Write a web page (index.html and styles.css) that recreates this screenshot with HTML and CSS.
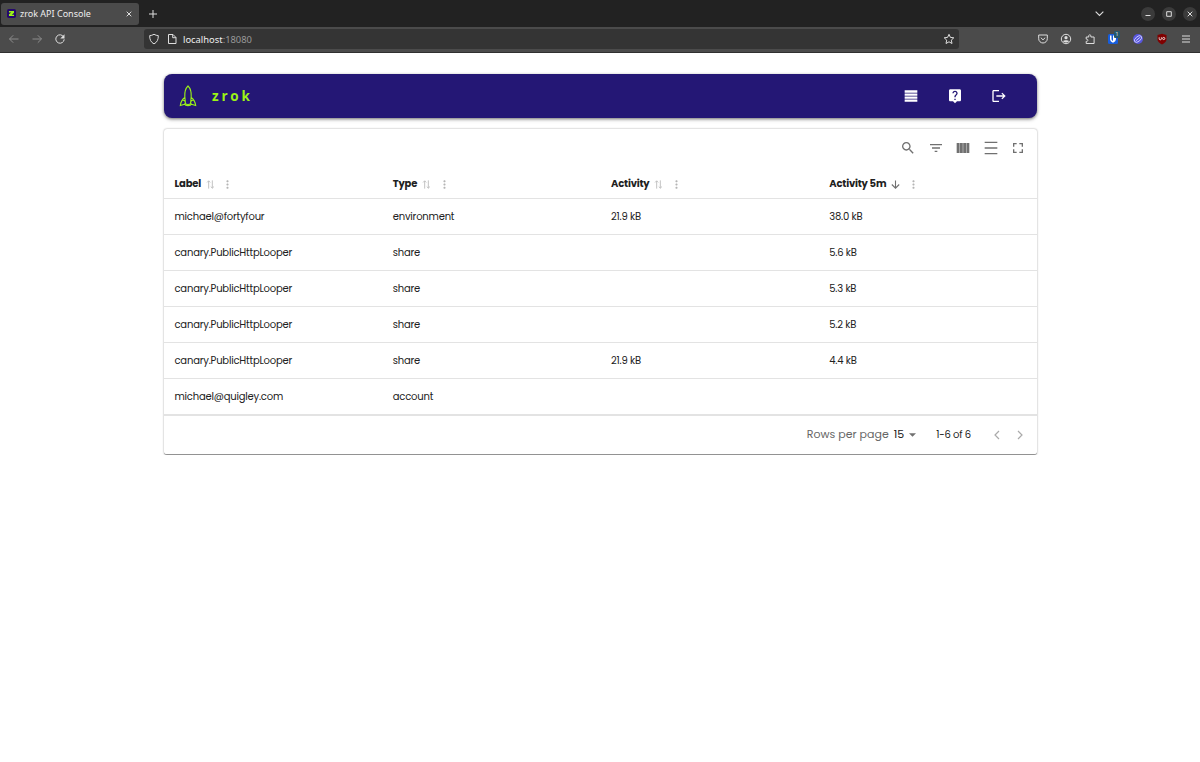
FILE: index.html
```html
<!DOCTYPE html>
<html lang="en">
<head>
    <meta charset="UTF-8">
    <title>zrok API Console</title>
    <link rel="stylesheet" href="styles.css">
</head>
<body>
    <svg class="sprite" width="0" height="0">
        <symbol id="i-sort" viewBox="0 0 24 24"><path d="M8 21V4M4.500 7.500 8 4l3.500 3.500M16 3v17M12.500 16.500 16 20l3.500-3.500" fill="none" stroke="currentColor" stroke-width="2"/></symbol>
        <symbol id="i-dots" viewBox="0 0 24 24"><path d="M12 8c1.100 0 2-.9 2-2s-.9-2-2-2-2 .9-2 2 .9 2 2 2zm0 2c-1.100 0-2 .9-2 2s.9 2 2 2 2-.9 2-2-.9-2-2-2zm0 6c-1.100 0-2 .9-2 2s.9 2 2 2 2-.9 2-2-.9-2-2-2z"/></symbol>
    </svg>

    <!-- Browser -->
    <div class="tab-strip">
        <div class="tab">
            <svg class="favicon" viewBox="0 0 16 16"><rect width="16" height="16" rx="3" fill="#24086d"/><path d="M3.500 3.500h9v3L8.500 10h4v2.500h-9v-3L7.500 6h-4z" fill="#9bf316"/></svg>
            <span class="tab-title">zrok API Console</span>
            <svg class="tab-close" viewBox="0 0 8 8"><path d="M1.700 1.700l4.600 4.600m0-4.600L1.700 6.300"/></svg>
        </div>
        <svg class="new-tab" viewBox="0 0 10 10"><path d="M5 1v8M1 5h8"/></svg>
        <svg class="tab-list" viewBox="0 0 10 10"><path d="M1.500 3.300 5 6.800l3.500-3.500"/></svg>
        <div class="window-controls">
            <span class="window-btn"><svg viewBox="0 0 14 14"><path d="M4.500 8.500h5"/></svg></span>
            <span class="window-btn"><svg viewBox="0 0 14 14"><path d="M4.700 4.700h4.600v4.600H4.700z"/></svg></span>
            <span class="window-btn"><svg viewBox="0 0 14 14"><path d="M4.700 4.700l4.600 4.600m0-4.600L4.700 9.300"/></svg></span>
        </div>
    </div>
    <div class="toolbar">
        <div class="nav-icons">
            <svg class="dim" viewBox="0 0 12 12"><path d="M10.500 6h-9M5.200 2.300 1.500 6l3.700 3.700"/></svg>
            <svg class="dim" viewBox="0 0 12 12"><path d="M1.500 6h9M6.800 2.300 10.500 6 6.800 9.700"/></svg>
            <svg viewBox="0 0 12 12"><path d="M9.700 4A4.200 4.200 0 1 0 10.200 6.300"/><path class="solid" d="M10.500 1.200v4.300H6.300z"/></svg>
        </div>
        <div class="url-bar">
            <svg viewBox="0 0 12 12"><path d="M6 1.300c1.500.9 2.800 1.200 4.300 1.300.1 4-1.200 6.700-4.300 8.300C2.900 9.300 1.600 6.600 1.700 2.600 3.200 2.500 4.500 2.200 6 1.300z"/></svg>
            <svg class="page-icon" viewBox="0 0 12 12"><path d="M2.500 1.500h4.500l3 3v6H2.500zM6.700 1.500v3.200H10"/></svg>
            <span class="url">localhost<span class="port">:18080</span></span>
            <svg class="star" viewBox="0 0 12 12"><path d="M6 1.300l1.400 3.100 3.400.4-2.500 2.300.7 3.400L6 8.800l-3 1.700.7-3.400L1.200 4.800l3.400-.4z"/></svg>
        </div>
        <div class="extensions">
            <svg viewBox="0 0 12 12"><path d="M1.700 2h8.600v3.700a4.300 4.300 0 0 1-8.600 0zM3.800 4.700 6 6.800l2.200-2.100"/></svg>
            <svg viewBox="0 0 12 12"><circle cx="6" cy="6" r="4.700"/><circle class="solid" cx="6" cy="4.700" r="1.600"/><path class="solid" d="M3 8.200c1-1.400 5-1.400 6 0-1.600 1.800-4.400 1.800-6 0z"/></svg>
            <svg viewBox="0 0 12 12"><path d="M2.200 10.500V8.300c2.300.5 2.300-2.600 0-2.200V4h2.600c-.7-3 2.600-3 2.100 0h3.200v6.500z"/></svg>
            <span class="vault">
                <svg viewBox="0 0 12 12"><rect width="10" height="10" y="1" rx="1.500" fill="#175ddc" stroke="none"/><path d="M2 2.500v3.300c0 2 1.200 3 3 4 1.800-1 3-2 3-4V2.500H5v5.600C3.900 7.400 3.500 7 3.500 5.800V2.500z" fill="#fff" stroke="none"/></svg>
                <span class="vault-count">1</span>
            </span>
            <svg viewBox="0 0 12 12"><circle cx="6" cy="6" r="5" fill="#5856dc" stroke="none"/><g stroke="#d0d0ff" stroke-width=".9" transform="rotate(-40 6 6)"><ellipse cx="6" cy="6" rx="4.200" ry="2.400"/><path d="M3.500 6h5"/></g></svg>
            <svg class="blocker" viewBox="0 0 12 12"><path d="M6 .8 10.500 2v4.200c0 2.500-2 4-4.500 5.200-2.500-1.200-4.500-2.700-4.500-5.200V2z" fill="#800000" stroke="none"/><path d="M3.200 4.300v1.500q0 1 1.100 1t1.100-1V4.300" stroke="#fff" stroke-width=".8"/><circle cx="7.700" cy="5.500" r="1.100" stroke="#fff" stroke-width=".8"/></svg>
            <svg viewBox="0 0 12 12"><path d="M2 3h8M2 6h8M2 9h8"/></svg>
        </div>
    </div>

    <div class="container">
        <div class="app-bar">
            <svg class="logo" viewBox="0 0 18 22"><path d="M9 1C6.400 3.500 5.600 7.500 5.800 11.500L6.400 18c.3 1.900 4.900 1.900 5.200 0l.6-6.500C12.400 7.500 11.600 3.500 9 1zM5.800 12.500C3 14.500 1.800 17 1.300 20.500l4.200-1.200.9-1.300c-.1-2-.9-3-2.700-2.700M12.200 12.500c2.800 2 4 4.500 4.500 8l-4.200-1.200-.9-1.300c.1-2 .9-3 2.700-2.700M5.500 19.300c1 1.800 6 1.800 7 0"/></svg>
            <span class="brand">zrok</span>
            <div class="app-actions">
                <svg viewBox="0 0 24 24"><path d="M2.500 3.500h19v3.600h-19zm0 4.800h19v3.300h-19zm0 4.500h19v3.400h-19zm0 4.600h19v3.300h-19z"/></svg>
                <svg viewBox="0 0 24 24"><path d="M19 2H5c-1.100 0-2 .9-2 2v14c0 1.100.9 2 2 2h4l3 3 3-3h4c1.100 0 2-.9 2-2V4c0-1.100-.9-2-2-2zm-6 16h-2v-2h2v2zm2.070-7.750-.9.920C13.450 11.900 13 12.500 13 14h-2v-.5c0-1.100.450-2.100 1.170-2.830l1.240-1.260c.370-.360.590-.860.590-1.410 0-1.100-.9-2-2-2s-2 .9-2 2H8c0-2.210 1.790-4 4-4s4 1.790 4 4c0 .880-.360 1.680-.930 2.250z"/></svg>
                <svg viewBox="0 0 24 24"><path d="m17 7-1.410 1.410L18.170 11H8v2h10.170l-2.580 2.580L17 17l5-5zM4 5h8V3H4c-1.100 0-2 .9-2 2v14c0 1.100.9 2 2 2h8v-2H4V5z"/></svg>
            </div>
        </div>

        <div class="table-card">
            <div class="table-tools">
                <svg viewBox="0 0 24 24"><path d="M15.500 14h-.790l-.280-.270C15.410 12.590 16 11.110 16 9.500 16 5.910 13.090 3 9.500 3S3 5.910 3 9.500 5.910 16 9.500 16c1.610 0 3.090-.590 4.230-1.570l.270.280v.790l5 4.990L20.490 19l-4.990-5zm-6 0C7.010 14 5 11.990 5 9.500S7.010 5 9.500 5 14 7.010 14 9.500 11.990 14 9.500 14z"/></svg>
                <svg viewBox="0 0 24 24"><path d="M10 18h4v-2h-4v2zM3 6v2h18V6H3zm3 7h12v-2H6v2z"/></svg>
                <svg viewBox="0 0 24 24"><path d="M2.500 4.500h4.300v15H2.500zM7.400 4.500h4.300v15H7.400zM12.300 4.500h4.300v15h-4.300zM17.200 4.500h4.300v15h-4.300z"/></svg>
                <svg viewBox="0 0 24 24"><path d="M2.500 2.500h19v2h-19zm0 8.500h19v2h-19zm0 8.500h19v2h-19z"/></svg>
                <svg viewBox="0 0 24 24"><path d="M6.500 14h-2v5.500H10v-2H6.500V14zm-2-4h2V6.500H10v-2H4.500V10zm13 7.500H14v2h5.500V14h-2v3.500zM14 4.500v2h3.500V10h2V4.500H14z"/></svg>
            </div>
            <div class="table-row table-head">
                <div class="cell"><span>Label</span><svg class="sort"><use href="#i-sort"/></svg><svg class="dots"><use href="#i-dots"/></svg></div>
                <div class="cell"><span>Type</span><svg class="sort"><use href="#i-sort"/></svg><svg class="dots"><use href="#i-dots"/></svg></div>
                <div class="cell"><span>Activity</span><svg class="sort"><use href="#i-sort"/></svg><svg class="dots"><use href="#i-dots"/></svg></div>
                <div class="cell"><span>Activity 5m</span><svg class="sort sorted" viewBox="0 0 24 24"><path d="M12 3v17M4 12l8 8 8-8" fill="none" stroke="currentColor" stroke-width="2.400"/></svg><svg class="dots"><use href="#i-dots"/></svg></div>
            </div>
            <div class="table-row">
                <div class="cell">michael@fortyfour</div><div class="cell">environment</div><div class="cell">21.9 kB</div><div class="cell">38.0 kB</div>
            </div>
            <div class="table-row">
                <div class="cell">canary.PublicHttpLooper</div><div class="cell">share</div><div class="cell"></div><div class="cell">5.6 kB</div>
            </div>
            <div class="table-row">
                <div class="cell">canary.PublicHttpLooper</div><div class="cell">share</div><div class="cell"></div><div class="cell">5.3 kB</div>
            </div>
            <div class="table-row">
                <div class="cell">canary.PublicHttpLooper</div><div class="cell">share</div><div class="cell"></div><div class="cell">5.2 kB</div>
            </div>
            <div class="table-row">
                <div class="cell">canary.PublicHttpLooper</div><div class="cell">share</div><div class="cell">21.9 kB</div><div class="cell">4.4 kB</div>
            </div>
            <div class="table-row">
                <div class="cell">michael@quigley.com</div><div class="cell">account</div><div class="cell"></div><div class="cell"></div>
            </div>
            <div class="pagination">
                <span class="rows-label">Rows per page</span>
                <span class="rows-value">15</span>
                <svg class="caret" viewBox="0 0 8 4"><path d="M0 0h8L4 4z"/></svg>
                <span class="range">1-6 of 6</span>
                <svg class="page-btn" viewBox="0 0 8 10"><path d="M6 1 2 5l4 4"/></svg>
                <svg class="page-btn" viewBox="0 0 8 10"><path d="m2 1 4 4-4 4"/></svg>
            </div>
        </div>
    </div>
</body>
</html>
```

FILE: styles.css
```css
* {
    box-sizing: border-box;
}

body {
    margin: 0;
    background: white;
    color: #212121;
    font-family: Poppins, Inter, sans-serif;
    font-size: 10px;
    letter-spacing: -0.2px;
}

svg {
    display: block;
    flex: none;
}

.sprite {
    position: absolute;
}

/* Browser */
.tab-strip {
    display: flex;
    align-items: center;
    height: 27px;
    background: #222;
    padding: 0 3px 0 1px;
    letter-spacing: 0;
}

.tab-strip svg,
.toolbar svg {
    fill: none;
    stroke: #dedede;
    stroke-width: 1;
}

.tab {
    display: flex;
    align-items: center;
    width: 138px;
    height: 22px;
    padding: 0 6px;
    background: #4b4b4b;
    border-radius: 3px;
}

.tab .favicon {
    width: 9px;
    height: 9px;
    stroke: none;
}

.tab-title {
    margin-left: 4px;
    font: 9px "Noto Sans", sans-serif;
    color: #eee;
    white-space: nowrap;
}

.tab-close {
    width: 8px;
    height: 8px;
    margin-left: auto;
}

.new-tab {
    width: 10px;
    height: 10px;
    margin-left: 9px;
}

.tab-list {
    width: 11px;
    height: 11px;
    margin-left: auto;
}

.window-controls {
    display: flex;
    gap: 7px;
    margin-left: 36px;
}

.window-btn {
    width: 14px;
    height: 14px;
    border-radius: 50%;
    background: #3b3b3b;
}

.toolbar {
    display: flex;
    align-items: center;
    height: 26px;
    padding-bottom: 1px;
    background: #4b4b4b;
    border-bottom: 1px solid #303030;
    letter-spacing: 0;
}

.toolbar svg {
    width: 12px;
    height: 12px;
}

.toolbar .solid {
    fill: #dedede;
    stroke: none;
}

.toolbar .dim {
    stroke: #8d8d8d;
}

.nav-icons {
    display: flex;
    gap: 11px;
    width: 144px;
    padding-left: 8px;
}

.url-bar {
    display: flex;
    align-items: center;
    width: 815px;
    height: 20px;
    padding: 0 4px;
    background: #343434;
    border-radius: 3px;
}

.page-icon {
    margin-left: 6px;
}

.url {
    margin-left: 5px;
    font: 9.4px "Noto Sans", sans-serif;
    color: #eee;
}

.port {
    color: #999;
}

.star {
    margin-left: auto;
}

.extensions {
    display: flex;
    align-items: center;
    gap: 12px;
    margin-left: 78px;
}

.extensions svg:nth-child(2) {
    margin-left: -1px;
}

.vault {
    position: relative;
}

.vault-count {
    position: absolute;
    top: -2px;
    right: 0;
    width: 6px;
    border-radius: 1px;
    background: #24576b;
    color: #ddd;
    font: 6px/7px "Noto Sans", sans-serif;
    text-align: center;
}

/* Console */
.container {
    width: 873px;
    margin: 21px 0 0 164px;
}

.app-bar {
    display: flex;
    align-items: center;
    height: 44px;
    padding: 0 30px 0 15px;
    border-radius: 8px;
    background: #241775;
    box-shadow: 0 1px 3px rgba(0, 0, 0, 0.45), 0 2px 4px rgba(0, 0, 0, 0.15);
}

.logo {
    width: 18px;
    height: 22px;
    fill: none;
    stroke: #9bf316;
    stroke-width: 1.1;
}

.brand {
    margin-left: 15px;
    font-family: "Open Sans", sans-serif;
    font-size: 13.5px;
    font-weight: 700;
    letter-spacing: 2.8px;
    color: #9bf316;
}

.app-actions {
    display: flex;
    gap: 28px;
    margin-left: auto;
    fill: white;
}

.app-actions svg {
    width: 16px;
    height: 16px;
}

.table-card {
    margin-top: 11px;
    border-bottom: 1px solid #929292;
    border-radius: 3px;
    background: white;
    box-shadow: 0 0 2px rgba(0, 0, 0, 0.4);
}

.table-tools {
    display: flex;
    justify-content: flex-end;
    align-items: center;
    gap: 11.4px;
    height: 39px;
    padding: 0 11px 1px 0;
    fill: #707070;
}

.table-tools svg {
    width: 16px;
    height: 16px;
}

.table-row {
    display: grid;
    grid-template-columns: repeat(4, 1fr);
    align-items: center;
    height: 36.1px;
    padding-top: 1px;
    border-bottom: 1px solid #e3e3e3;
}

.table-head {
    height: 31px;
    padding-top: 2px;
    font-weight: 700;
}

.table-row:nth-last-child(2) {
    height: 35.5px;
}

.cell {
    display: flex;
    align-items: center;
    padding-left: 10.5px;
    white-space: nowrap;
}

.sort {
    width: 11px;
    height: 11px;
    margin-left: 4px;
    color: #bdbdbd;
}

.sort.sorted {
    color: #707070;
}

.dots {
    width: 13px;
    height: 13px;
    margin-left: 5.5px;
    fill: #b5b5b5;
}

.pagination {
    display: flex;
    align-items: center;
    justify-content: flex-end;
    height: 39px;
    padding-right: 13px;
    border-top: 1px solid #e3e3e3;
}

.rows-label {
    font-size: 11px;
    letter-spacing: 0;
    color: #666;
}

.rows-value {
    margin-left: 5px;
    font-size: 11px;
    letter-spacing: 0;
}

.caret {
    width: 7px;
    height: 4px;
    margin-left: 5px;
    fill: #707070;
}

.range {
    margin: 0 7px 0 20px;
}

.page-btn {
    width: 8px;
    height: 10px;
    margin-left: 15px;
    fill: none;
    stroke: #aaa;
    stroke-width: 1.2;
}
```
